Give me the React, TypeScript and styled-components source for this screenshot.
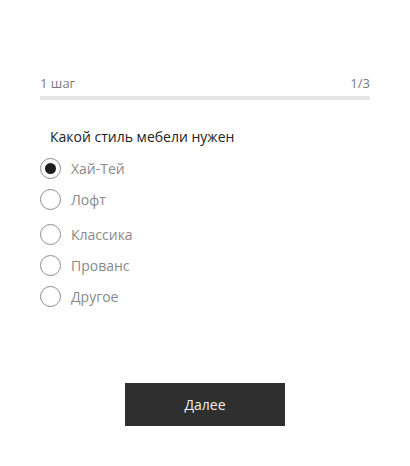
import React, { useState } from 'react'
import styled, { createGlobalStyle } from 'styled-components'

const Global = createGlobalStyle`
  body {
    margin: 0;
    background: #fff;
    font-family: "Open Sans", "Noto Sans", sans-serif;
  }
`

const Page = styled.div`
  width: 410px;
  height: 466px;
  box-sizing: border-box;
  padding: 74px 40px 0 40px;
  display: flex;
  flex-direction: column;
`

const StepRow = styled.div`
  display: flex;
  justify-content: space-between;
  font-size: 13px;
  line-height: 18px;
  color: #7a7a7a;
`

const Track = styled.div`
  margin-top: 4px;
  height: 4px;
  background: #e6e6e6;
`

const Question = styled.div`
  margin-top: 27px;
  padding-left: 10px;
  font-size: 14px;
  line-height: 20px;
  color: #222;
`

const Options = styled.div`
  margin-top: 10px;
  display: flex;
  flex-direction: column;
`

const Option = styled.label<{ $gap: number }>`
  display: flex;
  align-items: center;
  gap: 10px;
  height: 22px;
  margin-bottom: ${p => p.$gap}px;
  cursor: pointer;
  font-size: 14px;
  color: #8a8a8a;
`

const Circle = styled.span<{ $on: boolean }>`
  width: 19px;
  height: 19px;
  border: 1.5px solid #8d8d8d;
  border-radius: 50%;
  display: flex;
  align-items: center;
  justify-content: center;
  flex-shrink: 0;
  &::after {
    content: '';
    width: 11px;
    height: 11px;
    border-radius: 50%;
    background: #1e1e1e;
    display: ${p => (p.$on ? 'block' : 'none')};
  }
`

const Footer = styled.div`
  margin-top: 76px;
  display: flex;
  justify-content: center;
`

const NextButton = styled.button`
  width: 160px;
  height: 43px;
  border: none;
  background: #2f2f2f;
  color: #f0f0f0;
  font-family: inherit;
  font-size: 14px;
  cursor: pointer;
`

const styles = ['Хай-Тей', 'Лофт', 'Классика', 'Прованс', 'Другое']
const gaps = [9, 13, 9, 9, 0]

const App = () => {
  const [picked, setPicked] = useState(0)
  return (
    <Page>
      <Global />
      <StepRow>
        <span>1 шаг</span>
        <span>1/3</span>
      </StepRow>
      <Track />
      <Question>Какой стиль мебели нужен</Question>
      <Options>
        {styles.map((s, i) => (
          <Option key={s} $gap={gaps[i]} onClick={() => setPicked(i)}>
            <Circle $on={picked === i} />
            {s}
          </Option>
        ))}
      </Options>
      <Footer>
        <NextButton>Далее</NextButton>
      </Footer>
    </Page>
  )
}

export default App
